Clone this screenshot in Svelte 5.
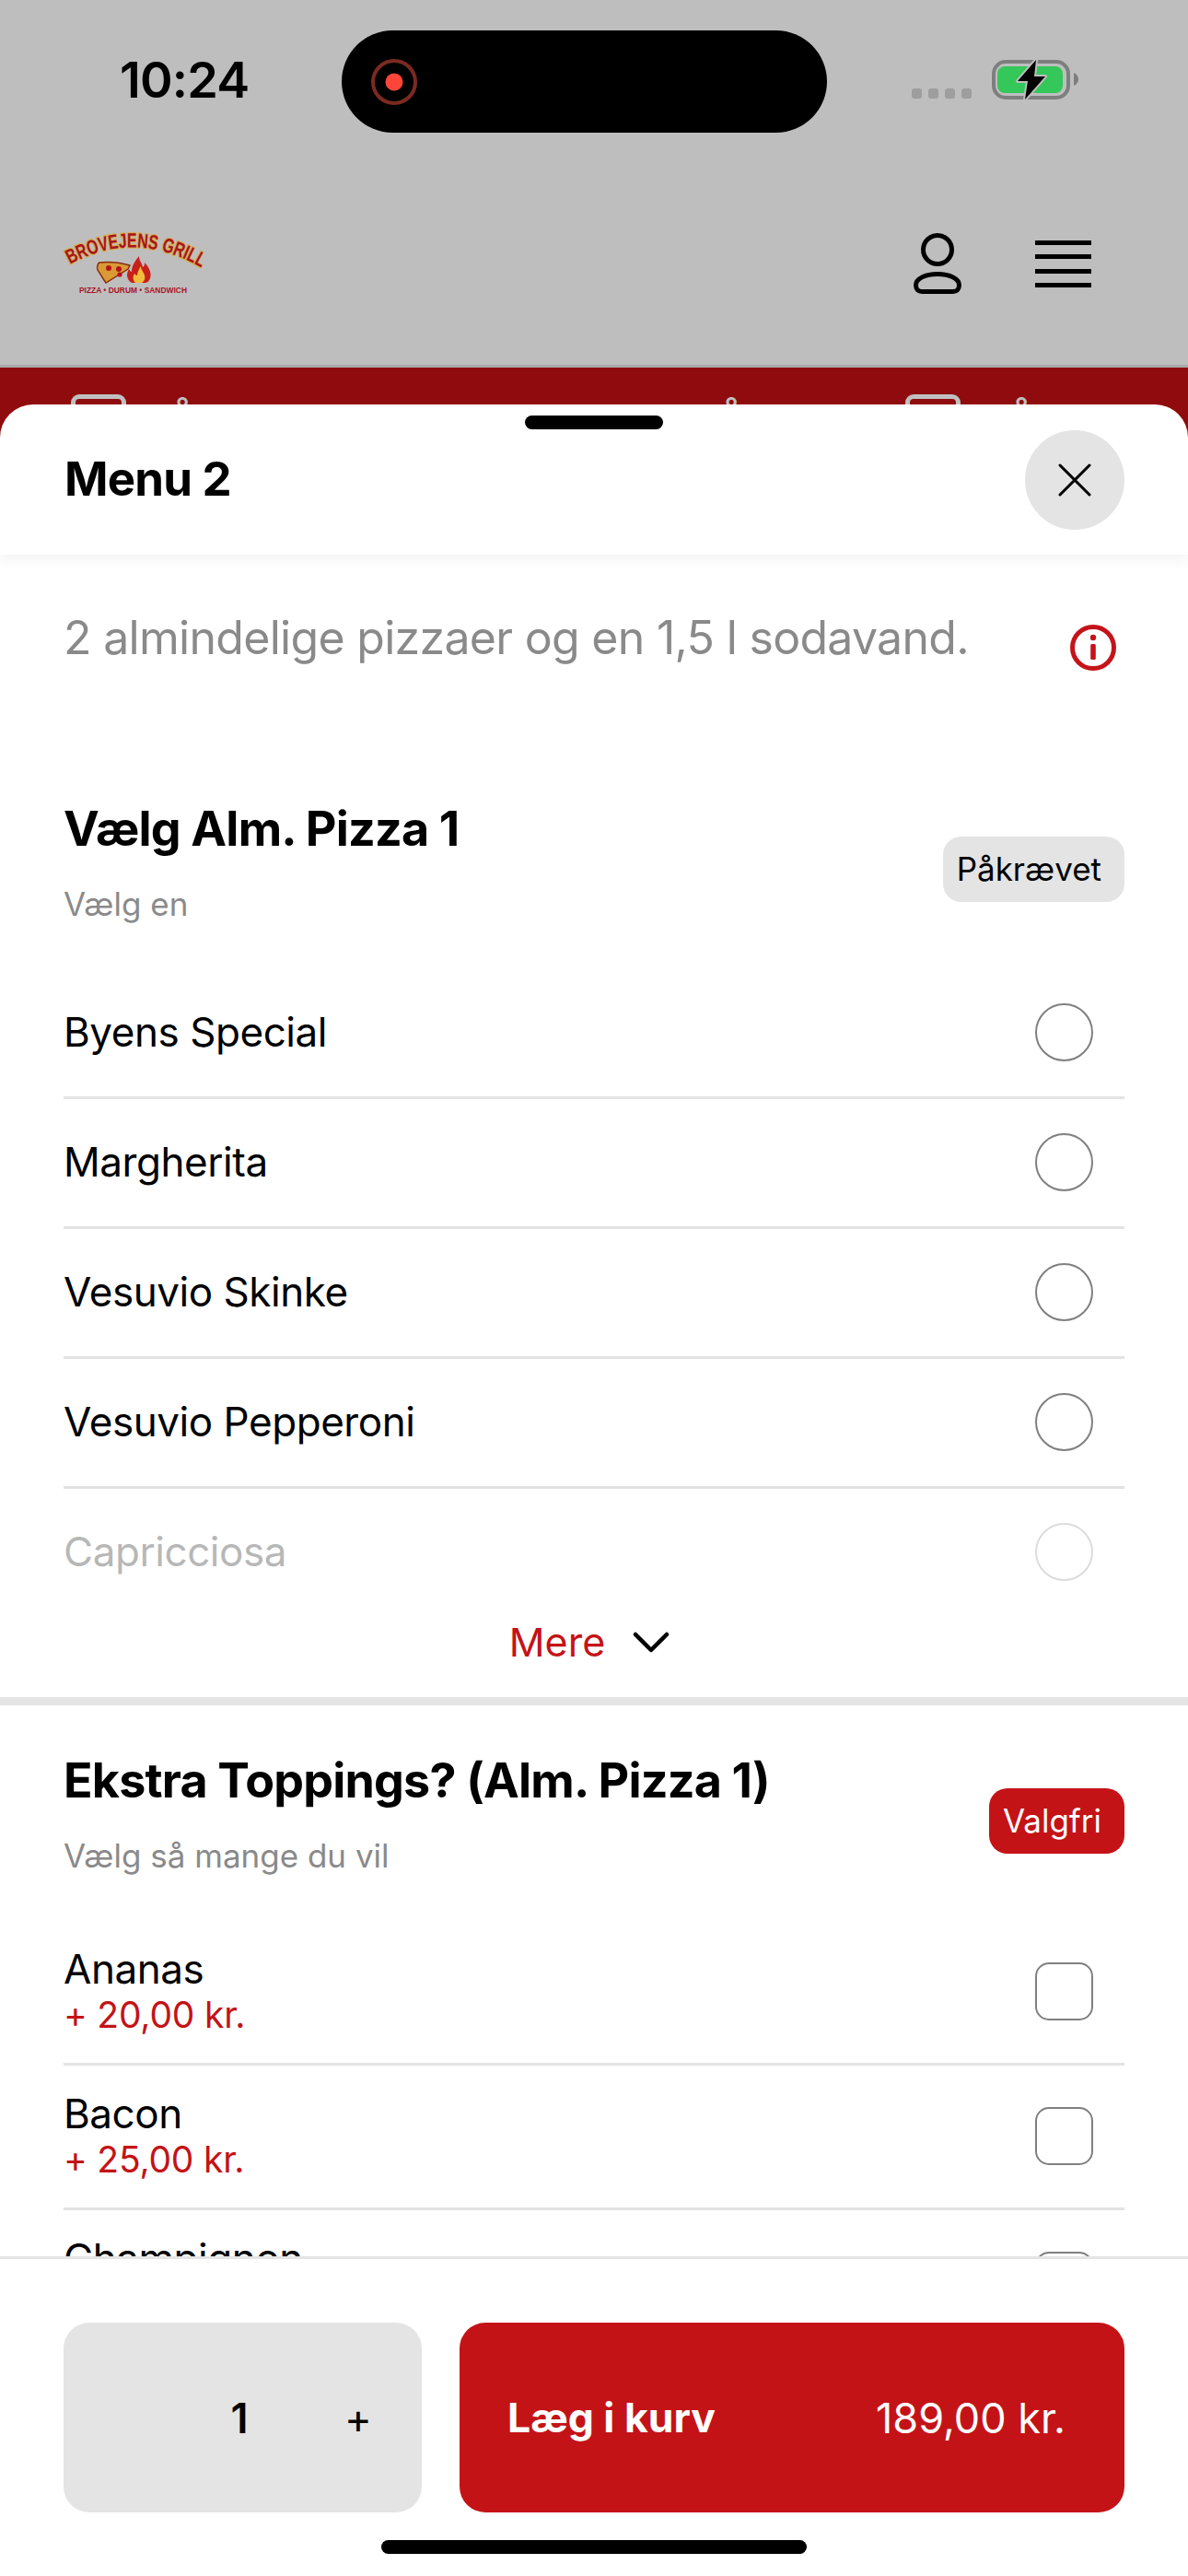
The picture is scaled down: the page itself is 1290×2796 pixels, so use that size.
<script>
  const pizzas = ['Byens Special', 'Margherita', 'Vesuvio Skinke', 'Vesuvio Pepperoni'];
  const toppings = [
    { name: 'Ananas', price: '+ 20,00 kr.' },
    { name: 'Bacon', price: '+ 25,00 kr.' },
    { name: 'Champignon', price: '' }
  ];
</script>

<div class="screen">
  <div class="backdrop">
    <div class="status">
      <span class="time">10:24</span>
      <div class="island">
        <svg width="50" height="50" viewBox="0 0 50 50">
          <circle cx="25" cy="25" r="23" fill="none" stroke="#7a2a22" stroke-width="4" />
          <circle cx="25" cy="25" r="9.5" fill="#ff453a" />
        </svg>
      </div>
      <div class="status-right">
        <div class="signal"><i></i><i></i><i></i><i></i></div>
        <svg width="96" height="50" viewBox="0 0 96 50">
          <rect x="2" y="5" width="81" height="39" rx="13" fill="none" stroke="#7e7e7e" stroke-width="4" />
          <rect x="6" y="10" width="71" height="29" rx="8" fill="#34c759" />
          <path d="M89 17c3 1 5 4 5 7s-2 6-5 7z" fill="#7e7e7e" />
          <path d="M48 3 28 26h11l-3 20 22-25H46z" fill="#000" stroke="#bebebe" stroke-width="4" stroke-linejoin="round" paint-order="stroke" />
        </svg>
      </div>
    </div>

    <div class="site-head">
      <svg class="logo" width="146" height="62" viewBox="0 0 146 62">
        <defs><path id="arc" d="M3 30Q72 -8 143 32" /></defs>
        <text class="logo-title" textLength="150" lengthAdjust="spacingAndGlyphs"><textPath href="#arc">BROVEJENS GRILL</textPath></text>
        <path d="M35 28c9-1 22 0 33 3l-2 4-24 15-2-3-7-11c-1-3 0-7 2-8z" fill="#d99a35" stroke="#8c2a10" stroke-width="1.4" />
        <circle cx="45" cy="34" r="3" fill="#b5121b" /><circle cx="56" cy="35" r="3" fill="#b5121b" /><circle cx="57" cy="41" r="2.6" fill="#b5121b" />
        <path d="M70 50c-6-4-6-10-3-15 1 2 2 3 3 3 0-6 3-11 8-17 0 5 3 7 4 12 2-1 2-3 2-5 5 5 8 12 6 17-1 3-3 5-6 5z" fill="#c9201c" />
        <path d="M74 50c-3-3-3-7-1-10 1 1 2 2 3 2 0-4 2-7 4-10 0 4 3 6 4 10 1 3 0 6-3 8z" fill="#f0bd3c" />
        <text class="logo-sub" x="13" y="61" textLength="117" lengthAdjust="spacingAndGlyphs">PIZZA • DURUM • SANDWICH</text>
      </svg>
      <div class="site-icons">
        <svg width="60" height="72" viewBox="0 0 60 72" fill="none" stroke="#000" stroke-width="5">
          <circle cx="30" cy="21" r="15.5" />
          <path d="M13 66.500h34c4 0 6.500-3 6.500-7 0-7-10-12-23.500-12S6.500 52.500 6.500 59.500c0 4 2.500 7 6.500 7z" />
        </svg>
        <div class="burger"><i></i><i></i><i></i><i></i></div>
      </div>
    </div>

    <div class="promo">
      <span class="promo-box"></span>
      <span class="promo-text first">Åbningstider</span>
      <span class="promo-text second">Åbent til 21</span>
      <span class="promo-box"></span>
      <span class="promo-text third">Åbent</span>
    </div>
  </div>

  <div class="sheet">
    <div class="handle"></div>
    <header class="sheet-head">
      <h1>Menu 2</h1>
      <button class="close" aria-label="Luk">
        <svg width="36" height="36" viewBox="0 0 36 36" stroke="#000" stroke-width="3" stroke-linecap="round">
          <path d="M2 2l32 32M34 2 2 34" />
        </svg>
      </button>
    </header>

    <div class="sheet-body">
      <div class="desc">
        <p>2 almindelige pizzaer og en 1,5 l sodavand.</p>
        <svg width="50" height="50" viewBox="0 0 50 50">
          <circle cx="25" cy="25" r="22.5" fill="none" stroke="#c4141a" stroke-width="5" />
          <circle cx="25" cy="14" r="3.2" fill="#c4141a" />
          <rect x="22.2" y="21" width="5.6" height="17" rx="1.5" fill="#c4141a" />
        </svg>
      </div>

      <section>
        <div class="group-head">
          <div>
            <h2>Vælg Alm. Pizza 1</h2>
            <p class="hint">Vælg en</p>
          </div>
          <span class="badge">Påkrævet</span>
        </div>
        {#each pizzas as pizza}
          <div class="row">
            <span class="name">{pizza}</span>
            <span class="radio"></span>
          </div>
        {/each}
        <div class="row last faded">
          <span class="name">Capricciosa</span>
          <span class="radio"></span>
        </div>
        <div class="more">
          <span>Mere</span>
          <svg width="40" height="24" viewBox="0 0 40 24" fill="none" stroke="#000" stroke-width="4.5" stroke-linecap="round" stroke-linejoin="round">
            <path d="M3 4l17 17L37 4" />
          </svg>
        </div>
      </section>

      <section class="second-group">
        <div class="group-head">
          <div>
            <h2>Ekstra Toppings? (Alm. Pizza 1)</h2>
            <p class="hint">Vælg så mange du vil</p>
          </div>
          <span class="badge optional">Valgfri</span>
        </div>
        {#each toppings as topping}
          <div class="row priced">
            <div>
              <div class="name">{topping.name}</div>
              <div class="price">{topping.price}</div>
            </div>
            <span class="check"></span>
          </div>
        {/each}
      </section>
    </div>

    <footer class="sheet-foot">
      <div class="qty">
        <span></span>
        <span class="count">1</span>
        <span class="plus">+</span>
      </div>
      <button class="add">
        <strong>Læg i kurv</strong>
        <span>189,00 kr.</span>
      </button>
    </footer>
    <div class="home"></div>
  </div>
</div>

<style>
  :global(body) { margin: 0; background: #fff; }

  .screen {
    width: 1290px;
    height: 2796px;
    position: relative;
    overflow: hidden;
    font-family: Inter, "Liberation Sans", sans-serif;
    color: #000;
    background: #fff;
  }

  .backdrop { background: #bebebe; height: 499px; overflow: hidden; }

  .status { height: 177px; position: relative; }
  .time {
    position: absolute;
    left: 130px;
    top: 56px;
    font-size: 54px;
    line-height: 62px;
    font-weight: 600;
    letter-spacing: -0.8px;
  }
  .island {
    position: absolute;
    left: 371px;
    top: 33px;
    width: 527px;
    height: 111px;
    border-radius: 56px;
    background: #000;
    display: flex;
    align-items: center;
    padding-left: 32px;
    box-sizing: border-box;
  }
  .status-right {
    position: absolute;
    left: 990px;
    top: 62px;
    display: flex;
    align-items: flex-start;
    gap: 22px;
  }
  .signal { display: flex; gap: 7px; margin-top: 34px; }
  .signal i { width: 11px; height: 11px; border-radius: 3px; background: #9e9e9e; }

  .site-head {
    height: 222px;
    box-sizing: border-box;
    padding: 80px 105px 0 73px;
    display: flex;
    justify-content: space-between;
    align-items: flex-start;
    border-bottom: 3px solid #a8a8a8;
  }
  .logo { overflow: visible; }
  .logo-title {
    font-family: "Liberation Sans", sans-serif;
    font-size: 22px;
    font-weight: 700;
    fill: #a8141c;
    stroke: #d6ad52;
    stroke-width: 2.5px;
    paint-order: stroke;
  }
  .logo-sub {
    font-family: "Liberation Sans", sans-serif;
    font-size: 8.5px;
    font-weight: 700;
    fill: #a8141f;
  }
  .site-icons { display: flex; align-items: flex-start; gap: 76px; margin-top: -7px; }
  .burger { width: 61px; display: flex; flex-direction: column; gap: 10.3px; margin-top: 11px; }
  .burger i { height: 5px; background: #000; }

  .promo {
    height: 71px;
    background: #8f0b0e;
    padding: 29px 0 0 77px;
    display: flex;
    align-items: flex-start;
    color: #c0c0c0;
    white-space: nowrap;
  }
  .promo-box {
    flex: none;
    width: 60px;
    height: 50px;
    box-sizing: border-box;
    border: 5px solid #c0c0c0;
    border-radius: 9px;
  }
  .promo-text { font-size: 44px; line-height: 54px; margin-top: 4px; }
  .promo-text.first { margin-left: 46px; width: 604px; flex: none; }
  .promo-text.second { width: 204px; flex: none; margin-left: -8px; }
  .promo-text.third { margin-left: 51px; }

  .sheet {
    position: absolute;
    left: 0;
    right: 0;
    top: 439px;
    bottom: 0;
    background: #fff;
    border-radius: 36px 36px 0 0;
    display: flex;
    flex-direction: column;
    overflow: hidden;
  }
  .handle {
    position: absolute;
    left: 570px;
    top: 12px;
    width: 150px;
    height: 15px;
    border-radius: 8px;
    background: #000;
  }
  .sheet-head {
    flex: none;
    height: 163px;
    box-sizing: border-box;
    padding: 28px 69px 0 70px;
    display: flex;
    justify-content: space-between;
    align-items: flex-start;
    box-shadow: 0 6px 14px rgba(0, 0, 0, 0.05);
    position: relative;
  }
  h1 { margin: 23px 0 0; font-size: 51px; line-height: 60px; font-weight: 700; letter-spacing: -0.8px; }
  .close {
    width: 108px;
    height: 108px;
    border: none;
    padding: 0;
    border-radius: 50%;
    background: #e4e4e4;
    display: flex;
    align-items: center;
    justify-content: center;
  }

  .sheet-body { flex: 1; min-height: 0; overflow: hidden; }
  .desc {
    height: 268px;
    box-sizing: border-box;
    padding: 59px 78px 0 69px;
    display: flex;
    justify-content: space-between;
    align-items: flex-start;
  }
  .desc p { margin: 0; font-size: 50px; line-height: 62px; color: #8a8a8a; letter-spacing: -0.7px; }
  .desc svg { margin-top: 17px; }

  section { padding: 0 69px; }
  .second-group { border-top: 9px solid #e4e4e4; padding-top: 52px; }
  .group-head {
    height: 146px;
    margin-bottom: 36px;
    display: flex;
    justify-content: space-between;
    align-items: center;
  }
  h2 { margin: 0; font-size: 52px; line-height: 62px; font-weight: 700; letter-spacing: -0.8px; }
  .hint { margin: 18px 0 4px; font-size: 35px; line-height: 64px; height: 64px; color: #8a8a8a; }
  .badge {
    height: 71px;
    box-sizing: border-box;
    padding: 0 25px 0 15px;
    border-radius: 20px;
    background: #e4e4e4;
    font-size: 35px;
    line-height: 71px;
  }
  .badge.optional { background: #c41317; color: #fff; }

  .row {
    height: 141px;
    box-sizing: border-box;
    border-bottom: 3px solid #e3e3e3;
    display: flex;
    justify-content: space-between;
    align-items: center;
    padding: 0 34px 3px 0;
  }
  .row.last { border-bottom: none; height: 138px; }
  .row.priced { height: 157px; }
  .faded { opacity: 0.28; }
  .name { font-size: 44px; line-height: 52px; letter-spacing: -0.45px; }
  .price { font-size: 39px; line-height: 48px; min-height: 48px; color: #c41317; letter-spacing: -0.2px; }
  .radio, .check {
    flex: none;
    width: 63px;
    height: 63px;
    margin-top: 2px;
    box-sizing: border-box;
    border: 2px solid #808080;
    border-radius: 50%;
  }
  .check { border-radius: 15px; }

  .more {
    height: 88px;
    box-sizing: border-box;
    padding: 0 10px 33px 0;
    display: flex;
    align-items: center;
    justify-content: center;
    gap: 30px;
    font-size: 43px;
    color: #c41317;
  }

  .sheet-foot {
    flex: none;
    height: 347px;
    box-sizing: border-box;
    border-top: 3px solid #e4e4e4;
    padding: 69px 69px 0;
    display: flex;
    gap: 41px;
    align-items: flex-start;
    background: #fff;
  }
  .qty {
    flex: none;
    width: 389px;
    height: 206px;
    border-radius: 28px;
    background: #e4e4e4;
    display: grid;
    grid-template-columns: repeat(3, 128px);
    align-items: center;
    justify-items: center;
  }
  .count { font-size: 45px; font-weight: 600; margin-right: 2px; }
  .plus { font-size: 45px; }
  .add {
    flex: 1;
    height: 206px;
    border: none;
    border-radius: 28px;
    background: #c41317;
    color: #fff;
    display: flex;
    justify-content: space-between;
    align-items: center;
    padding: 0 64px 0 52px;
    font-family: inherit;
    font-size: 45px;
  }
  .add strong { font-weight: 700; font-size: 44.5px; }
  .home {
    position: absolute;
    left: 414px;
    bottom: 24px;
    width: 462px;
    height: 15px;
    border-radius: 8px;
    background: #000;
  }
</style>
